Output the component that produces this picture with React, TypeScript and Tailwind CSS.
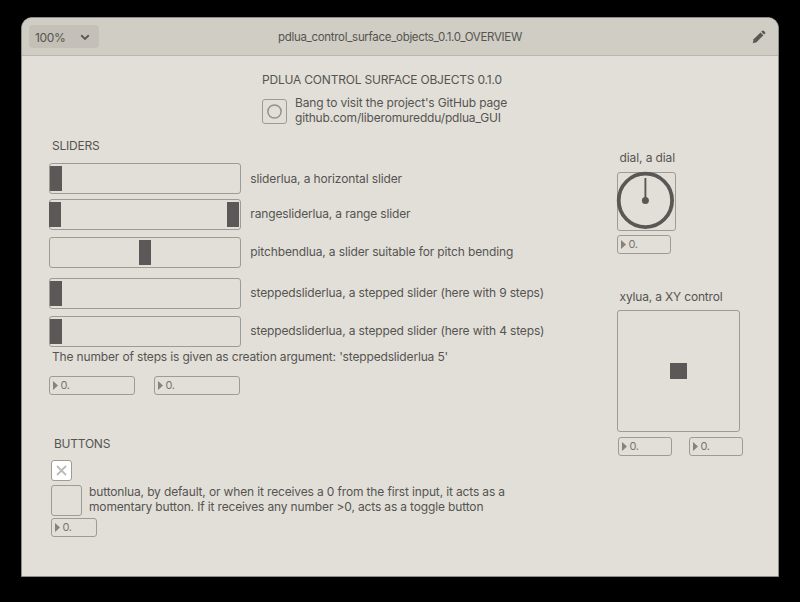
import type { ReactNode } from "react";

const outline = "border border-[#9e9b94] rounded-[3px] box-border shrink-0";

function Label({ children, className = "tracking-[-0.15px]" }: { children: ReactNode; className?: string }) {
  return <div className={`whitespace-nowrap leading-[15px] ${className}`}>{children}</div>;
}

function NumberBox({ className }: { className: string }) {
  return (
    <div className={`${outline} flex h-[19px] items-center pl-[3px] ${className}`}>
      <svg width="5" height="9" viewBox="0 0 5 9" className="shrink-0">
        <path d="M0 0 L5 4.5 L0 9 Z" fill="#86837d" />
      </svg>
      <span className="ml-[2.5px] text-[11px] leading-[15px] tracking-[-0.4px] text-[#77756f]">0.</span>
    </div>
  );
}

function Thumb({ className = "" }: { className?: string }) {
  return <div className={`h-[25px] w-3 bg-[#5a5957] ${className}`} />;
}

function SliderRow({ children, label, className, labelClass }: {
  children: ReactNode;
  label: string;
  className: string;
  labelClass: string;
}) {
  return (
    <div className={`flex h-[31px] items-start ${className}`}>
      <div className={`${outline} flex h-[31px] w-48 items-center`}>{children}</div>
      <Label className={`ml-[9.3px] ${labelClass}`}>{label}</Label>
    </div>
  );
}

export default function App() {
  return (
    <div className="h-[602px] w-[800px] overflow-hidden bg-black pl-[21px] pt-[17px] font-['Inter','Liberation_Sans',sans-serif] text-[12px] font-[430] text-[#555450]">
      <div className="flex h-[560px] w-[758px] flex-col overflow-hidden rounded-t-[11px] border border-[#8e8d88] bg-[#e2dfd9]">
        <header className="flex h-[38px] shrink-0 items-center border-b border-[#b8b6ae] bg-[#d0cdc4]">
          <div className="ml-[7px] flex h-[23px] w-[70px] items-center rounded-[4px] bg-[#c5c0b7] pl-[6px]">
            <Label className="mt-px w-[31px] text-[12px] tracking-[-0.3px]">100%</Label>
            <svg width="10" height="7" viewBox="0 0 10 7" className="ml-[14px] mt-px">
              <path d="M1.2 1.3 L5 5 L8.8 1.3" fill="none" stroke="#5a5955" strokeWidth="1.9" />
            </svg>
          </div>
          <Label className="ml-[179px] mt-[2px] w-[250px] text-[11.5px] tracking-[-0.31px]">
            pdlua_control_surface_objects_0.1.0_OVERVIEW
          </Label>
          <svg width="14" height="14" viewBox="0 0 14 14" className="ml-[224px]">
            <path d="M0.8 13.2 L1.6 9.3 L8.5 2.4 L11.4 5.3 L4.5 12.2 Z" fill="#595854" />
            <path d="M9.2 1.7 L10 0.9 Q11 0.1 12 1 L12.9 1.9 Q13.8 2.9 12.9 3.8 L12.1 4.6 Z" fill="#595854" />
          </svg>
        </header>

        <main className="flex flex-col">
          <div className="ml-60 pt-[16px]">
            <Label className="tracking-[-0.2px]">PDLUA CONTROL SURFACE OBJECTS 0.1.0</Label>
            <div className="mt-[8px] flex h-[30px] items-start">
              <div className={`${outline} mt-[4px] flex size-[25px] items-center justify-center`}>
                <svg width="15" height="15" viewBox="0 0 15 15">
                  <circle cx="7.5" cy="7.5" r="6.6" fill="none" stroke="#94918b" strokeWidth="1.5" />
                </svg>
              </div>
              <Label className="ml-[8px] tracking-[-0.16px]">
                Bang to visit the project's GitHub page
                <br />
                <span className="tracking-[-0.18px]">github.com/liberomureddu/pdlua_GUI</span>
              </Label>
            </div>
          </div>

          <div className="flex">
            <section className="ml-[27px] w-[568px] shrink-0">
              <Label className="ml-[3px] mt-[13px] tracking-[-0.22px]">SLIDERS</Label>
              <SliderRow className="mt-[10px]" labelClass="mt-[8px] tracking-[-0.13px]" label="sliderlua, a horizontal slider">
                <Thumb />
              </SliderRow>
              <SliderRow className="mt-[5px]" labelClass="mt-[7px] tracking-[-0.15px]" label="rangesliderlua, a range slider">
                <Thumb className="-ml-px" />
                <Thumb className="ml-[166px]" />
              </SliderRow>
              <SliderRow className="mt-[7px]" labelClass="mt-[7px] tracking-[-0.13px]" label="pitchbendlua, a slider suitable for pitch bending">
                <Thumb className="ml-[89px]" />
              </SliderRow>
              <SliderRow className="mt-[10px]" labelClass="mt-[7px] tracking-[-0.14px]" label="steppedsliderlua, a stepped slider (here with 9 steps)">
                <Thumb />
              </SliderRow>
              <SliderRow className="mt-[7px]" labelClass="mt-[7px] tracking-[-0.14px]" label="steppedsliderlua, a stepped slider (here with 4 steps)">
                <Thumb />
              </SliderRow>
              <Label className="ml-[3px] mt-[2px] tracking-[-0.155px]">
                The number of steps is given as creation argument: 'steppedsliderlua 5'
              </Label>
              <div className="mt-[12px] flex gap-[19px]">
                <NumberBox className="w-[86px]" />
                <NumberBox className="w-[86px]" />
              </div>

              <Label className="ml-[5px] mt-[41px] tracking-[-0.25px]">BUTTONS</Label>
              <div className={`${outline} ml-[2px] mt-[9px] flex size-[21px] items-center justify-center bg-white`}>
                <svg width="11" height="11" viewBox="0 0 11 11">
                  <path d="M1 1 L10 10 M10 1 L1 10" stroke="#bdbbb7" strokeWidth="1.8" />
                </svg>
              </div>
              <div className="ml-[2px] mt-[4px] flex h-[31px]">
                <div className={`${outline} size-[31px]`} />
                <Label className="-mt-px ml-[7px] tracking-[-0.145px]">
                  buttonlua, by default, or when it receives a 0 from the first input, it acts as a
                  <br />
                  <span className="tracking-[-0.15px]">
                    momentary button. If it receives any number &gt;0, acts as a toggle button
                  </span>
                </Label>
              </div>
              <NumberBox className="ml-[2px] mt-[2px] w-[46px]" />
            </section>

            <section>
              <Label className="ml-[2.5px] mt-[25px] tracking-[-0.1px]">dial, a dial</Label>
              <div className={`${outline} mt-[7px] size-[59px]`}>
                <svg width="57" height="57" viewBox="0 0 57 57" className="overflow-visible">
                  <circle cx="27.4" cy="27.4" r="26.7" fill="none" stroke="#595855" strokeWidth="3.8" />
                  <path d="M27.4 5 V28" stroke="#595855" strokeWidth="1.9" />
                  <circle cx="27.4" cy="27.4" r="3.5" fill="#595855" />
                </svg>
              </div>
              <NumberBox className="mt-[4px] w-[54px]" />
              <Label className="ml-[2.5px] mt-[35px] tracking-[-0.17px]">xylua, a XY control</Label>
              <div className={`${outline} mt-[6px] flex h-[122px] w-[123px] items-center justify-center`}>
                <div className="h-4 w-[17px] bg-[#5a5957]" />
              </div>
              <div className="ml-[1px] mt-[5px] flex gap-[17px]">
                <NumberBox className="w-[54px]" />
                <NumberBox className="w-[54px]" />
              </div>
            </section>
          </div>
        </main>
      </div>
    </div>
  );
}
